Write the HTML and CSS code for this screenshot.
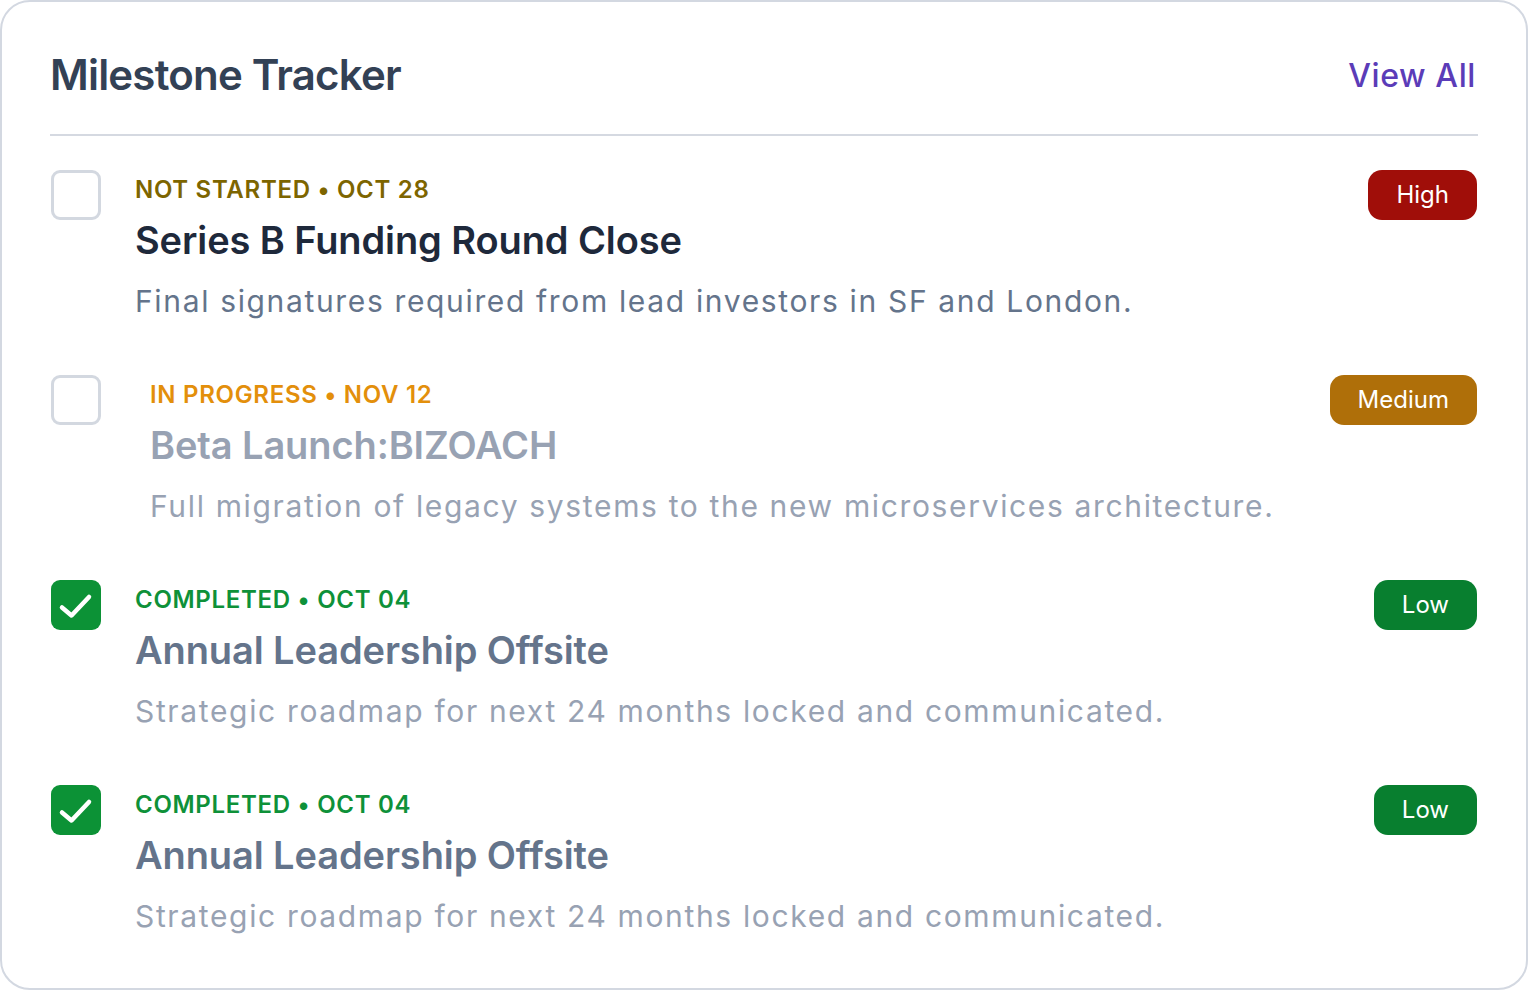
FILE: index.html
```html
<!DOCTYPE html>
<html lang="en">
<head>
    <meta charset="UTF-8">
    <title>Milestone Tracker</title>
    <link rel="stylesheet" href="styles.css">
</head>
<body>
    <div class="card">
        <div class="card-header">
            <h1>Milestone Tracker</h1>
            <a class="view-all" href="#">View All</a>
        </div>

        <ul class="milestones">
            <li class="milestone">
                <span class="check"></span>
                <div class="milestone-body">
                    <div class="status status-todo">NOT STARTED • OCT 28</div>
                    <h2 class="milestone-title">Series B Funding Round Close</h2>
                    <p class="milestone-text">Final signatures required from lead investors in SF and London.</p>
                </div>
                <span class="badge badge-high">High</span>
            </li>

            <li class="milestone is-active">
                <span class="check"></span>
                <div class="milestone-body">
                    <div class="status status-progress">IN PROGRESS • NOV 12</div>
                    <h2 class="milestone-title">Beta Launch:BIZOACH</h2>
                    <p class="milestone-text">Full migration of legacy systems to the new microservices architecture.</p>
                </div>
                <span class="badge badge-medium">Medium</span>
            </li>

            <li class="milestone is-done">
                <span class="check checked">
                    <svg width="50" height="50" viewBox="0 0 50 50"><path d="M11 27.5 L20.5 35.5 L38 17" fill="none" stroke="#fff" stroke-width="4.5" stroke-linecap="round" stroke-linejoin="round"/></svg>
                </span>
                <div class="milestone-body">
                    <div class="status status-done">COMPLETED • OCT 04</div>
                    <h2 class="milestone-title">Annual Leadership Offsite</h2>
                    <p class="milestone-text">Strategic roadmap for next 24 months locked and communicated.</p>
                </div>
                <span class="badge badge-low">Low</span>
            </li>

            <li class="milestone is-done">
                <span class="check checked">
                    <svg width="50" height="50" viewBox="0 0 50 50"><path d="M11 27.5 L20.5 35.5 L38 17" fill="none" stroke="#fff" stroke-width="4.5" stroke-linecap="round" stroke-linejoin="round"/></svg>
                </span>
                <div class="milestone-body">
                    <div class="status status-done">COMPLETED • OCT 04</div>
                    <h2 class="milestone-title">Annual Leadership Offsite</h2>
                    <p class="milestone-text">Strategic roadmap for next 24 months locked and communicated.</p>
                </div>
                <span class="badge badge-low">Low</span>
            </li>
        </ul>
    </div>
</body>
</html>
```

FILE: styles.css
```css
* {
    box-sizing: border-box;
}
body {
    font-family: Inter, "Noto Sans", sans-serif;
    margin: 0;
    background: #fff;
    color: #1e293b;
}
.card {
    width: 1528px;
    height: 990px;
    border: 2px solid #d3d8e1;
    border-radius: 30px;
    padding: 48px 48px 0 48px;
    background: #fff;
}
.card-header {
    display: flex;
    align-items: center;
    justify-content: space-between;
    padding-bottom: 34px;
    border-bottom: 2px solid #d5d9e1;
}
h1 {
    font-size: 42px;
    line-height: 50px;
    font-weight: 600;
    margin: 0;
    color: #334155;
    letter-spacing: -0.8px;
}
.view-all {
    font-size: 32px;
    font-weight: 500;
    color: #5b3cb8;
    text-decoration: none;
    letter-spacing: 0.6px;
    margin-right: 2px;
}
.milestones {
    list-style: none;
    margin: 34px 0 0 0;
    padding: 0;
    display: flex;
    flex-direction: column;
    gap: 54px;
}
.milestone {
    display: flex;
    align-items: flex-start;
}
.check {
    flex: none;
    width: 50px;
    height: 50px;
    border: 3px solid #d3d8e0;
    border-radius: 9px;
    margin-left: 1px;
}
.check.checked {
    border: none;
    background: #0c9236;
}
.check svg {
    display: block;
}
.milestone-body {
    flex: 1;
    padding-top: 4px;
    margin-left: 34px;
}
.is-active .milestone-body {
    margin-left: 49px;
}
.status {
    font-size: 24px;
    line-height: 32px;
    font-weight: 600;
    letter-spacing: 0.7px;
}
.status-todo { color: #7d6500; }
.status-progress { color: #e38f0b; }
.status-done { color: #0e9139; }
.milestone-title {
    font-size: 38px;
    line-height: 48px;
    font-weight: 600;
    margin: 10px 0 0 0;
    color: #1e293b;
    letter-spacing: -0.1px;
}
.milestone-text {
    font-size: 30px;
    line-height: 40px;
    margin: 17px 0 0 0;
    color: #64748b;
    letter-spacing: 1.65px;
}
.is-active .milestone-title,
.is-active .milestone-text {
    color: #98a2b3;
}
.is-done .milestone-title {
    color: #64748b;
}
.is-done .milestone-text {
    color: #98a2b3;
}
.badge {
    flex: none;
    height: 50px;
    line-height: 50px;
    padding: 0 28px;
    border-radius: 14px;
    color: #fff;
    font-size: 24px;
    margin-right: 1px;
}
.badge-high { background: #a00e09; }
.badge-medium { background: #af6f09; }
.badge-low { background: #087f2f; }
```
